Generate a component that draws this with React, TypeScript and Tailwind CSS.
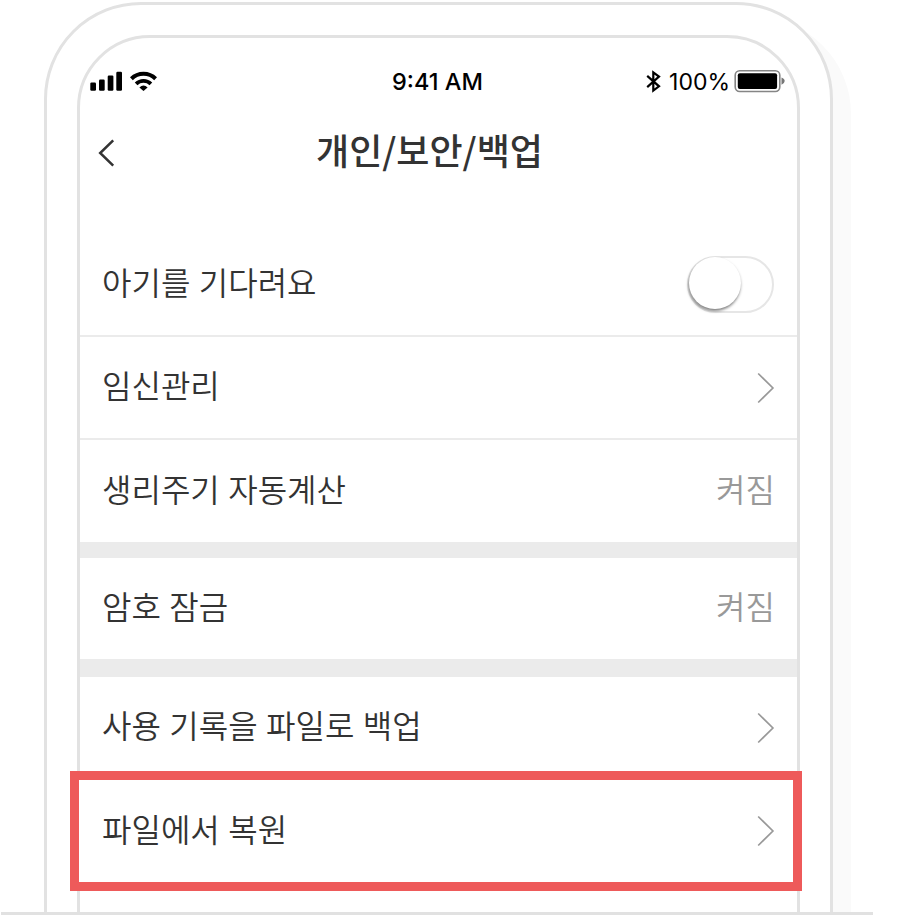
import type { ReactNode } from "react";

function Chevron() {
  return (
    <svg className="block shrink-0" width="18" height="32" viewBox="0 0 18 32" fill="none">
      <path d="M1.2 1.5 15.9 16 1.2 30.5" stroke="#999" strokeWidth="1.7" />
    </svg>
  );
}

function Row({ label, className, children }: { label: string; className: string; children?: ReactNode }) {
  return (
    <div className={`flex shrink-0 items-center justify-between pl-[22px] pr-[22px] ${className}`}>
      <span className="-mt-[7px] whitespace-nowrap">{label}</span>
      {children}
    </div>
  );
}

function Toggle() {
  return (
    <div className="mr-[1px] h-[57px] w-[87px] rounded-full border-2 border-[#e6e6e6]">
      <div className="-ml-[0.5px] -mt-[1px] h-[52.5px] w-[52.5px] rounded-full bg-white shadow-[-0.5px_2px_3px_rgba(0,0,0,0.5)]" />
    </div>
  );
}

function StatusBar() {
  return (
    <div className="grid h-[26px] shrink-0 grid-cols-3 items-center pl-[10px] pr-[12px] font-['Inter',sans-serif] text-[23.5px] leading-[26px] text-black">
      <div className="-mt-[1px] flex items-center gap-[7px]">
        <svg width="33" height="20" viewBox="0 0 33 20">
          <rect x="0.3" y="11.5" width="5.7" height="8.3" rx="1.2" />
          <rect x="9" y="8.5" width="5.7" height="11.3" rx="1.2" />
          <rect x="17.7" y="4.5" width="5.7" height="15.3" rx="1.2" />
          <rect x="26.3" y="0.7" width="5.7" height="19.1" rx="1.2" />
        </svg>
        <svg width="27" height="20" viewBox="0 0 27 20" fill="none" stroke="#000">
          <path d="M1.4 7.7A17.3 17.3 0 0 1 25.6 7.7" strokeWidth="4" />
          <path d="M6.1 12.9A10.6 10.6 0 0 1 20.9 12.9" strokeWidth="3.8" />
          <path d="M9.4 16.4Q13.5 12.4 17.6 16.4L13.5 20Z" fill="#000" stroke="none" />
        </svg>
      </div>
      <span className="text-center font-medium whitespace-nowrap">9:41 AM</span>
      <div className="-mt-[1px] flex items-center justify-end">
        <svg className="mr-[8px]" width="15" height="23" viewBox="0 0 15 23" fill="none">
          <path d="M1.2 5.9 13 16.3 7.3 20.6V2.4L13 6.6 1.2 17.1" stroke="#000" strokeWidth="2.2" />
        </svg>
        <span className="mr-[4px] mt-[1px] text-[23px] whitespace-nowrap">100%</span>
        <svg width="51" height="24" viewBox="0 0 51 24" fill="none">
          <rect x="1.2" y="1.7" width="44.6" height="20.8" rx="4.5" stroke="#858585" strokeWidth="1.6" />
          <rect x="3.8" y="4.3" width="39.3" height="15.6" rx="2" fill="#000" />
          <path d="M47.5 8.4Q50.7 9.6 50.7 12T47.5 15.8Z" fill="#777" />
        </svg>
      </div>
    </div>
  );
}

export default function App() {
  return (
    <div className="flex h-[915px] w-[907px] flex-col overflow-hidden bg-white font-['Noto_Sans_CJK_KR',sans-serif] text-[#333]">
      <div className="h-[912px] shrink-0 overflow-hidden pl-[44px] pt-[1.5px]">
        <div className="h-[1000px] w-[789px] rounded-t-[97px] border-[3px] border-[#e2e2e2] bg-white px-[30px] pt-[30px] shadow-[18px_15px_0_0_#fafafa]">
          <div className="flex h-[960px] w-[723px] flex-col rounded-t-[73px] border-[3px] border-[#e2e2e2] pt-[31px]">
            <StatusBar />
            <div className="mt-[29px] grid h-[52px] shrink-0 grid-cols-[60px_1fr_60px] items-center">
              <svg className="ml-[18px] mt-[6px]" width="17" height="28" viewBox="0 0 17 28" fill="none">
                <path d="M15.2 1.4 2.2 14 15.2 26.6" stroke="#333" strokeWidth="2.5" />
              </svg>
              <h1 className="-ml-[18px] -mt-[2px] text-center text-[36px] font-medium leading-[52px] whitespace-nowrap">개인/보안/백업</h1>
            </div>

            <div className="mt-[57.5px] flex flex-col text-[32px] font-[350] leading-[46px] [word-spacing:1.3px]">
              <Row label="아기를 기다려요" className="h-[104px] border-b-2 border-[#ebebeb]">
                <Toggle />
              </Row>
              <Row label="임신관리" className="h-[103px] border-b-2 border-[#ebebeb]">
                <Chevron />
              </Row>
              <Row label="생리주기 자동계산" className="h-[102px]">
                <span className="-mt-[7px] text-[#999]">켜짐</span>
              </Row>
              <div className="h-[16px] shrink-0 bg-[#ebebeb]" />
              <Row label="암호 잠금" className="h-[101px]">
                <span className="-mt-[7px] text-[#999]">켜짐</span>
              </Row>
              <div className="h-[18px] shrink-0 bg-[#ebebeb]" />
              <Row label="사용 기록을 파일로 백업" className="h-[94px] pt-[7px]">
                <Chevron />
              </Row>
              <div className="relative -ml-[10px] -mr-[5px] flex h-[120px] shrink-0 items-center justify-between border-[9px] border-[#ee5a5a] bg-white pl-[23px] pr-[18px]">
                <span className="-mt-[7px] whitespace-nowrap">파일에서 복원</span>
                <Chevron />
              </div>
            </div>
          </div>
        </div>
      </div>
      <div className="ml-[1px] h-[3px] w-[872px] shrink-0 bg-[#e1e1e1]" />
    </div>
  );
}
